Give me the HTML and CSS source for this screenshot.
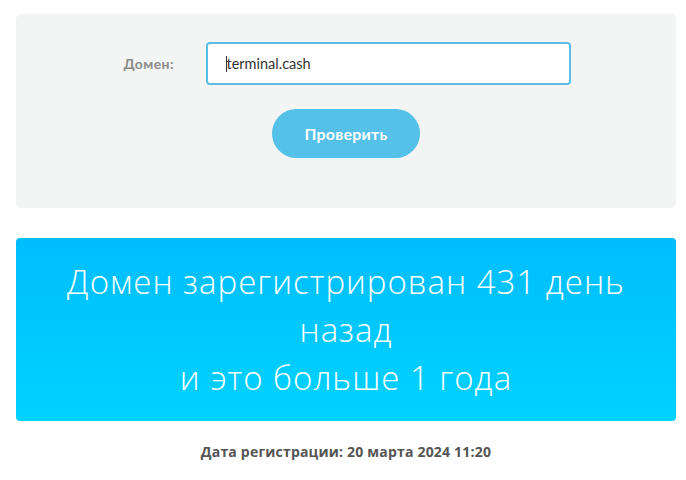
FILE: index.html
```html
<!DOCTYPE html>
<html lang="ru">
<head>
<meta charset="utf-8">
<link rel="stylesheet" href="styles.css">
</head>
<body>
<div class="page">
  <form class="panel">
    <div class="row">
      <label class="label" for="d">Домен:</label>
      <div class="input"><span class="caret"></span>terminal.cash</div>
    </div>
    <button class="btn" type="button">Проверить</button>
  </form>
  <div class="result">Домен зарегистрирован 431 день<br>назад<br>и это больше 1 года</div>
  <p class="date">Дата регистрации: 20 марта 2024 11:20</p>
</div>
</body>
</html>
```
FILE: styles.css
```css
html, body { margin: 0; padding: 0; background: #fff; }
.page { padding: 14px 10px 0 16px; font-family: "Open Sans", "Liberation Sans", sans-serif; }
.panel { background: #f3f5f5; border-radius: 5px; height: 194px; box-sizing: border-box; padding-top: 28px; display: flex; flex-direction: column; align-items: center; margin: 0; }
.row { display: flex; align-items: center; gap: 32px; margin-left: 2px; }
.label { font-family: "Lato", sans-serif; font-weight: 700; font-size: 14px; letter-spacing: 0.4px; color: #8a8a8a; width: 50px; white-space: nowrap; }
.input { width: 365px; height: 43px; box-sizing: border-box; border: 2px solid #5bbde3; border-radius: 4px; background: #fff; display: flex; align-items: center; padding-left: 18px; font-family: "Lato", sans-serif; font-size: 14.5px; color: #333; }
.caret { display: inline-block; width: 1px; height: 16px; background: #333; }
.btn { margin-top: 24px; width: 148px; height: 49px; border: 0; border-radius: 25px; background: #55c0e8; color: #fff; font-family: "Lato", sans-serif; font-weight: 700; font-size: 16px; letter-spacing: 0.2px; }
.result { margin-top: 30px; height: 183px; box-sizing: border-box; padding-top: 20px; border-radius: 4px; background: linear-gradient(#00bdfd, #00d2ff); color: #fff; text-align: center; font-weight: 300; font-size: 33px; letter-spacing: 1px; line-height: 48px; }
.date { margin: 21px 0 0; text-align: center; font-family: "Open Sans", sans-serif; font-weight: 700; font-size: 14px; letter-spacing: 0.2px; color: #555; }
```
